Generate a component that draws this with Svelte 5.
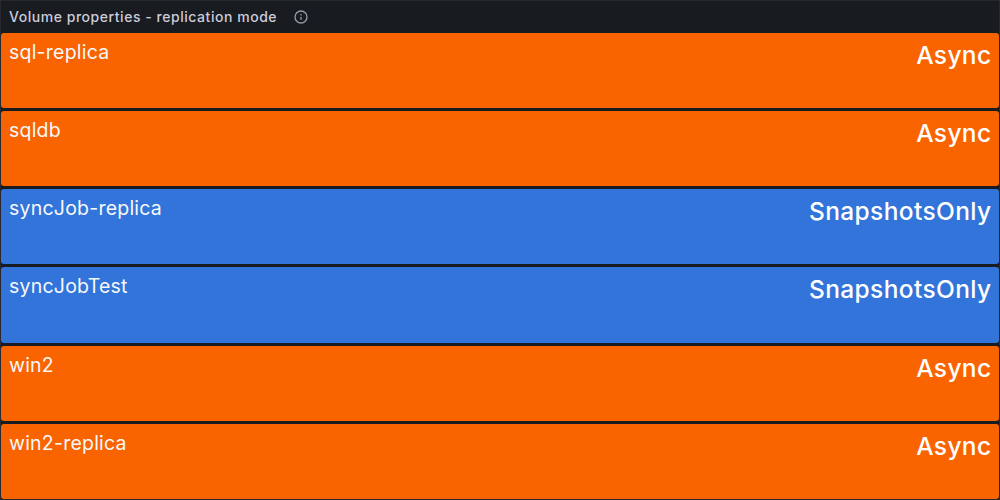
<script>
  const rows = [
    ['sql-replica', 'Async'],
    ['sqldb', 'Async'],
    ['syncJob-replica', 'SnapshotsOnly'],
    ['syncJobTest', 'SnapshotsOnly'],
    ['win2', 'Async'],
    ['win2-replica', 'Async'],
  ];
</script>

<section class="panel">
  <header>
    <h2>Volume properties - replication mode</h2>
    <svg viewBox="0 0 24 24" width="16" height="16" fill="currentColor" aria-hidden="true">
      <path d="M12,2A10,10,0,1,0,22,12,10.01114,10.01114,0,0,0,12,2Zm0,18a8,8,0,1,1,8-8A8.00917,8.00917,0,0,1,12,20Zm0-8.5a1,1,0,0,0-1,1v3a1,1,0,0,0,2,0v-3A1,1,0,0,0,12,11.5Zm0-4a1.25,1.25,0,1,0,1.25,1.25A1.25,1.25,0,0,0,12,7.5Z" />
    </svg>
  </header>
  <div class="rows">
    {#each rows as [name, mode]}
      <div class="row" class:snap={mode === 'SnapshotsOnly'}>
        <span class="name">{name}</span>
        <span class="mode">{mode}</span>
      </div>
    {/each}
  </div>
</section>

<style>
  .panel {
    box-sizing: border-box;
    width: 1000px;
    height: 500px;
    border: 1px solid #27292e;
    background: #181b1f;
    display: flex;
    flex-direction: column;
    font-family: Inter, sans-serif;
    overflow: hidden;
  }
  header {
    height: 32px;
    flex: none;
    display: flex;
    align-items: center;
    gap: 16px;
    padding-left: 8px;
    color: #ccccdc;
  }
  h2 {
    margin: 0;
    font-size: 14px;
    line-height: 22px;
    font-weight: 500;
    letter-spacing: 0.54px;
  }
  svg { color: #9899a4; }
  .rows {
    flex: 1;
    display: grid;
    grid-template-rows: repeat(6, 1fr);
    gap: 3px;
  }
  .row {
    display: flex;
    justify-content: space-between;
    padding: 7px 8px;
    border-radius: 3px;
    background: #fa6400;
    color: #fff;
    box-sizing: border-box;
  }
  .snap { background: #3274d9; }
  .name { font-size: 19.5px; line-height: 24px; letter-spacing: 0.22px; color: #f7f8fa; }
  .mode { font-size: 24.5px; line-height: 30px; font-weight: 500; letter-spacing: 0.38px; margin-right: -0.5px; }
</style>
